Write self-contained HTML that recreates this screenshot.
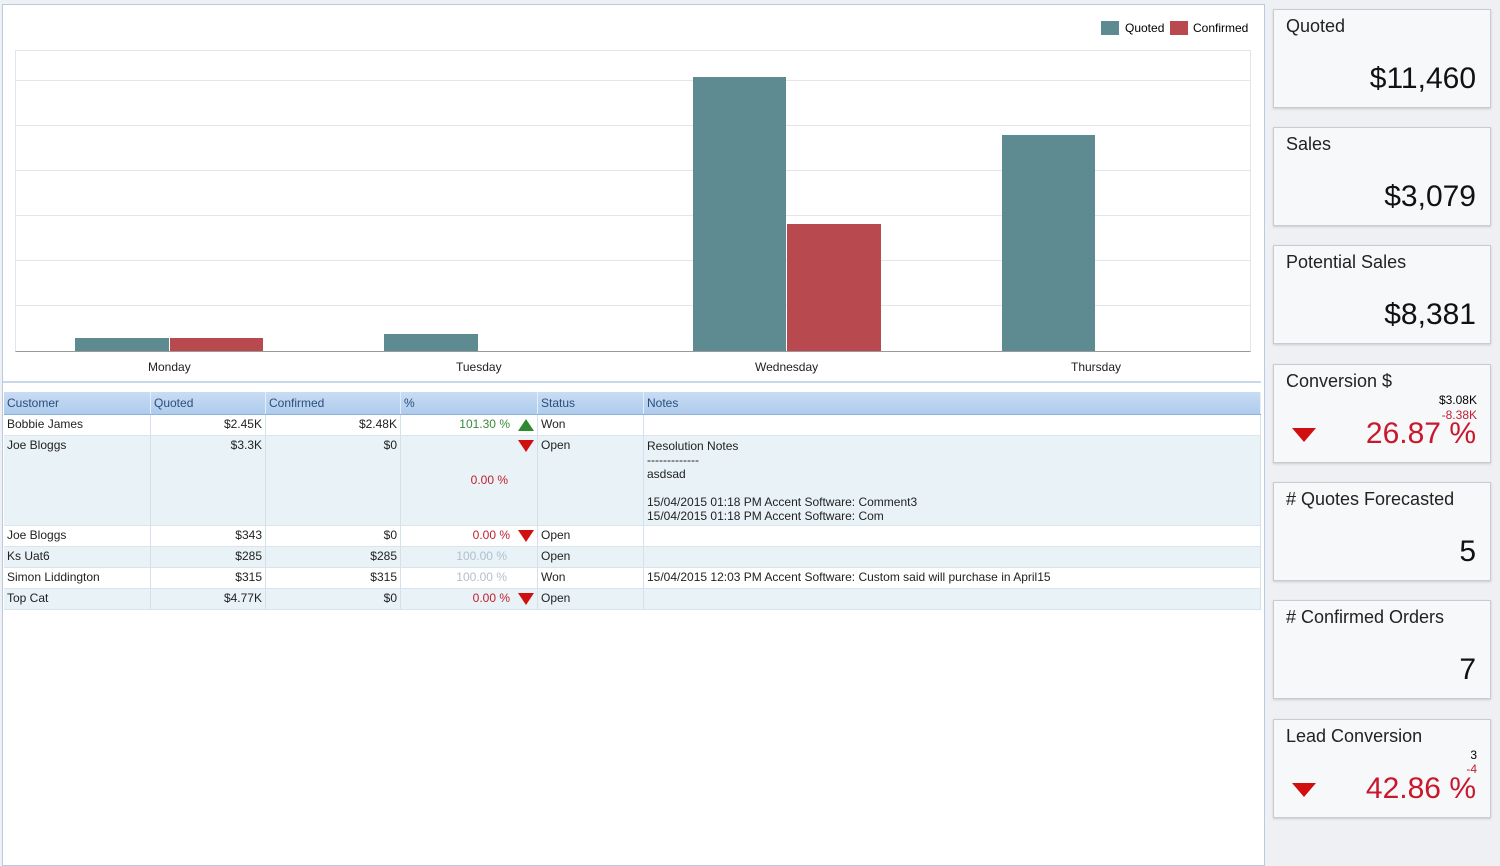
<!DOCTYPE html><html><head><style>
body{margin:0;width:1500px;height:864px;background:#eef0f3;font-family:"Liberation Sans",sans-serif;position:relative;overflow:hidden}
.a{position:absolute}
.main{left:2px;top:4px;width:1261px;height:860px;background:#fff;border:1px solid #b8cbe0}
.chart{left:3px;top:5px;width:1258px;height:376px;border-bottom:2px solid #c8d8ea;background:#fff}
.g{left:15px;width:1235px;height:1px;background:#e2e6ea}
.bar{position:absolute}
.q{background:#5e8a91}.c{background:#b84a4f}
.lbl{font-size:12px;color:#222;top:360px}
.card{left:1273px;width:216px;height:97px;background:#f7f8fa;border:1px solid #c8ccd2;box-shadow:0 1px 2px #ccc}
.card .t{position:absolute;left:12px;top:6px;font-size:18px;color:#222}
.card .v{position:absolute;right:14px;top:52px;font-size:30px;color:#111}
table{position:absolute;left:4px;top:392px;border-collapse:collapse;font-size:12px;color:#222}
td{border-right:1px solid #d4e0ea;border-bottom:1px solid #d9e4ec;padding:0 3px;height:20px;vertical-align:top;line-height:19px}
th{background:linear-gradient(#c9dcf3,#aecbee);color:#2a4f7a;font-weight:normal;text-align:left;height:22px;padding:0 3px;border-right:1px solid #e4eef9;border-bottom:1px solid #8fb0d8}
tr.l td{background:#e9f2f6}
.r{text-align:right}
.up{display:inline-block;width:0;height:0;border-left:8px solid transparent;border-right:8px solid transparent;border-bottom:12px solid #2f8a2f;vertical-align:middle;margin-left:8px}
.dn{display:inline-block;width:0;height:0;border-left:8px solid transparent;border-right:8px solid transparent;border-top:12px solid #d01010;vertical-align:middle;margin-left:8px}
.bigdn{position:absolute;left:18px;width:0;height:0;border-left:12px solid transparent;border-right:12px solid transparent;border-top:14px solid #d01010}
</style></head><body>
<div class="a main"></div>
<div class="a chart">
</div>
<div class="a" style="left:1101px;top:21px;width:18px;height:14px;background:#5e8a91"></div>
<div class="a" style="left:1125px;top:21px;font-size:12px">Quoted</div>
<div class="a" style="left:1170px;top:21px;width:18px;height:14px;background:#b84a4f"></div>
<div class="a" style="left:1193px;top:21px;font-size:12px">Confirmed</div>
<div class="a" style="left:15px;top:50px;width:1234px;height:300px;border:1px solid #e2e6ea;border-bottom:1px solid #999"></div>
<div class="a g" style="top:80px"></div><div class="a g" style="top:125px"></div><div class="a g" style="top:170px"></div><div class="a g" style="top:215px"></div><div class="a g" style="top:260px"></div><div class="a g" style="top:305px"></div>
<div class="bar q" style="left:75px;top:338px;width:94px;height:13px"></div>
<div class="bar c" style="left:170px;top:338px;width:93px;height:13px"></div>
<div class="bar q" style="left:384px;top:334px;width:94px;height:17px"></div>
<div class="bar q" style="left:693px;top:77px;width:93px;height:274px"></div>
<div class="bar c" style="left:787px;top:224px;width:94px;height:127px"></div>
<div class="bar q" style="left:1002px;top:135px;width:93px;height:216px"></div>
<div class="a lbl" style="left:148px">Monday</div>
<div class="a lbl" style="left:456px">Tuesday</div>
<div class="a lbl" style="left:755px">Wednesday</div>
<div class="a lbl" style="left:1071px">Thursday</div>
<table>
<tr><th style="width:140px">Customer</th><th style="width:108px">Quoted</th><th style="width:128px">Confirmed</th><th style="width:130px">%</th><th style="width:99px">Status</th><th style="width:610px">Notes</th></tr>
<tr><td>Bobbie James</td><td class="r">$2.45K</td><td class="r">$2.48K</td><td class="r" style="color:#3a8a3a">101.30 %<span class="up"></span></td><td>Won</td><td></td></tr>
<tr class="l"><td style="height:87px">Joe Bloggs</td><td class="r">$3.3K</td><td class="r">$0</td><td class="r" style="color:#c02030;position:relative"><span class="dn"></span><div style="position:absolute;right:29px;top:35px">0.00 %</div></td><td>Open</td><td><div style="height:89px;line-height:14px;padding-top:3px;box-sizing:border-box">Resolution Notes<br>-------------<br>asdsad<br><br>15/04/2015 01:18 PM Accent Software: Comment3<br>15/04/2015 01:18 PM Accent Software: Com</div></td></tr>
<tr><td>Joe Bloggs</td><td class="r">$343</td><td class="r">$0</td><td class="r" style="color:#c02030">0.00 %<span class="dn"></span></td><td>Open</td><td></td></tr>
<tr class="l"><td>Ks Uat6</td><td class="r">$285</td><td class="r">$285</td><td class="r" style="color:#b0c0d0;padding-right:30px">100.00 %</td><td>Open</td><td></td></tr>
<tr><td>Simon Liddington</td><td class="r">$315</td><td class="r">$315</td><td class="r" style="color:#b0c0d0;padding-right:30px">100.00 %</td><td>Won</td><td>15/04/2015 12:03 PM Accent Software: Custom said will purchase in April15</td></tr>
<tr class="l"><td>Top Cat</td><td class="r">$4.77K</td><td class="r">$0</td><td class="r" style="color:#c02030">0.00 %<span class="dn"></span></td><td>Open</td><td></td></tr>
</table>
<div class="a card" style="top:9px"><div class="t">Quoted</div><div class="v">$11,460</div></div>
<div class="a card" style="top:127px"><div class="t">Sales</div><div class="v">$3,079</div></div>
<div class="a card" style="top:245px"><div class="t">Potential Sales</div><div class="v">$8,381</div></div>
<div class="a card" style="top:364px"><div class="t">Conversion $</div><div style="position:absolute;right:13px;top:28px;font-size:12px">$3.08K</div><div style="position:absolute;right:13px;top:43px;font-size:12px;color:#c02030">-8.38K</div><div class="bigdn" style="top:63px"></div><div class="v" style="color:#c8182c;top:52px">26.87 %</div></div>
<div class="a card" style="top:482px"><div class="t"># Quotes Forecasted</div><div class="v">5</div></div>
<div class="a card" style="top:600px"><div class="t"># Confirmed Orders</div><div class="v">7</div></div>
<div class="a card" style="top:719px"><div class="t">Lead Conversion</div><div style="position:absolute;right:13px;top:28px;font-size:12px">3</div><div style="position:absolute;right:13px;top:42px;font-size:12px;color:#c02030">-4</div><div class="bigdn" style="top:63px"></div><div class="v" style="color:#c8182c;top:52px">42.86 %</div></div>
</body></html>
